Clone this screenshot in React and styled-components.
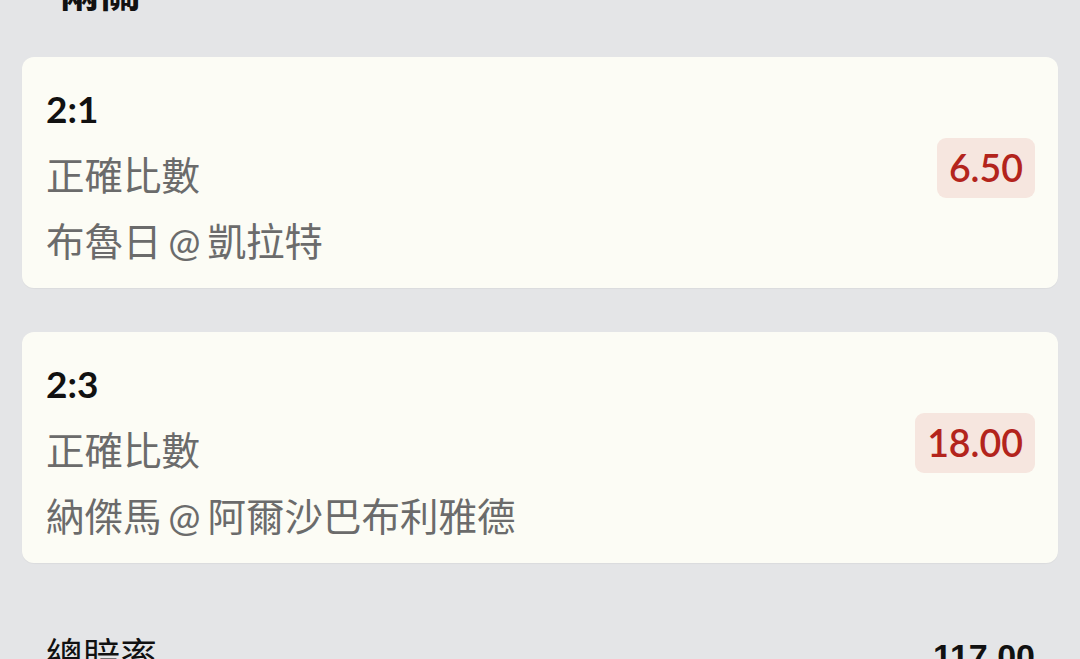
import styled, { createGlobalStyle } from 'styled-components';

const legs = [
  { score: '2:1', market: '正確比數', match: '布魯日 @ 凱拉特', odds: '6.50' },
  { score: '2:3', market: '正確比數', match: '納傑馬 @ 阿爾沙巴布利雅德', odds: '18.00' },
];

export default function App() {
  return (
    <>
      <GlobalStyle />
      <Page>
        <Title>兩關</Title>
        <LegList>
          {legs.map((leg) => (
            <LegCard key={leg.score}>
              <LegInfo>
                <Score>{leg.score}</Score>
                <SubLine>{leg.market}</SubLine>
                <SubLine>{leg.match}</SubLine>
              </LegInfo>
              <OddsBadge>{leg.odds}</OddsBadge>
            </LegCard>
          ))}
        </LegList>
        <Summary>
          <SummaryLabel>總賠率</SummaryLabel>
          <SummaryValue>117.00</SummaryValue>
        </Summary>
      </Page>
    </>
  );
}

const GlobalStyle = createGlobalStyle`
  html, body {
    margin: 0;
    background: #e4e5e7;
    overflow: hidden;
  }
  body {
    font-family: Lato, "Noto Sans CJK TC", sans-serif;
    color: #111;
  }
`;

const Page = styled.main`
  display: flex;
  flex-direction: column;
  height: 659px;
  overflow: hidden;
  padding: 0 22px;
`;

const Title = styled.h1`
  font-size: 41px;
  font-weight: 700;
  line-height: 48px;
  margin: -32px 0 41px 37px;
`;

const LegList = styled.section`
  display: flex;
  flex-direction: column;
  gap: 44px;
`;

const LegCard = styled.article`
  align-items: center;
  background: #fcfcf5;
  border-radius: 12px;
  box-shadow: 0 1px 1px rgba(0, 0, 0, 0.04);
  box-sizing: border-box;
  display: flex;
  height: 231px;
  justify-content: space-between;
  padding: 19px 23px 14px 24px;
`;

const LegInfo = styled.div`
  display: flex;
  flex-direction: column;
`;

const Score = styled.span`
  font-size: 37px;
  font-weight: 700;
  line-height: 66px;
`;

const SubLine = styled.span`
  color: #6b6b6b;
  font-size: 38.5px;
  line-height: 66px;
  word-spacing: -3px;
`;

const OddsBadge = styled.span`
  background: #f6e6df;
  border-radius: 9px;
  color: #b3241c;
  font-size: 37.5px;
  font-weight: 600;
  height: 60px;
  line-height: 60px;
  margin-bottom: 15px;
  padding: 0 12px;
`;

const Summary = styled.footer`
  align-items: center;
  display: flex;
  justify-content: space-between;
  margin-top: 68px;
  padding: 0 23px 0 24px;
`;

const SummaryLabel = styled.span`
  font-size: 37px;
  line-height: 50px;
`;

const SummaryValue = styled.span`
  font-family: "Liberation Sans", "Noto Sans", sans-serif;
  font-size: 34px;
  font-weight: 700;
  line-height: 50px;
`;
